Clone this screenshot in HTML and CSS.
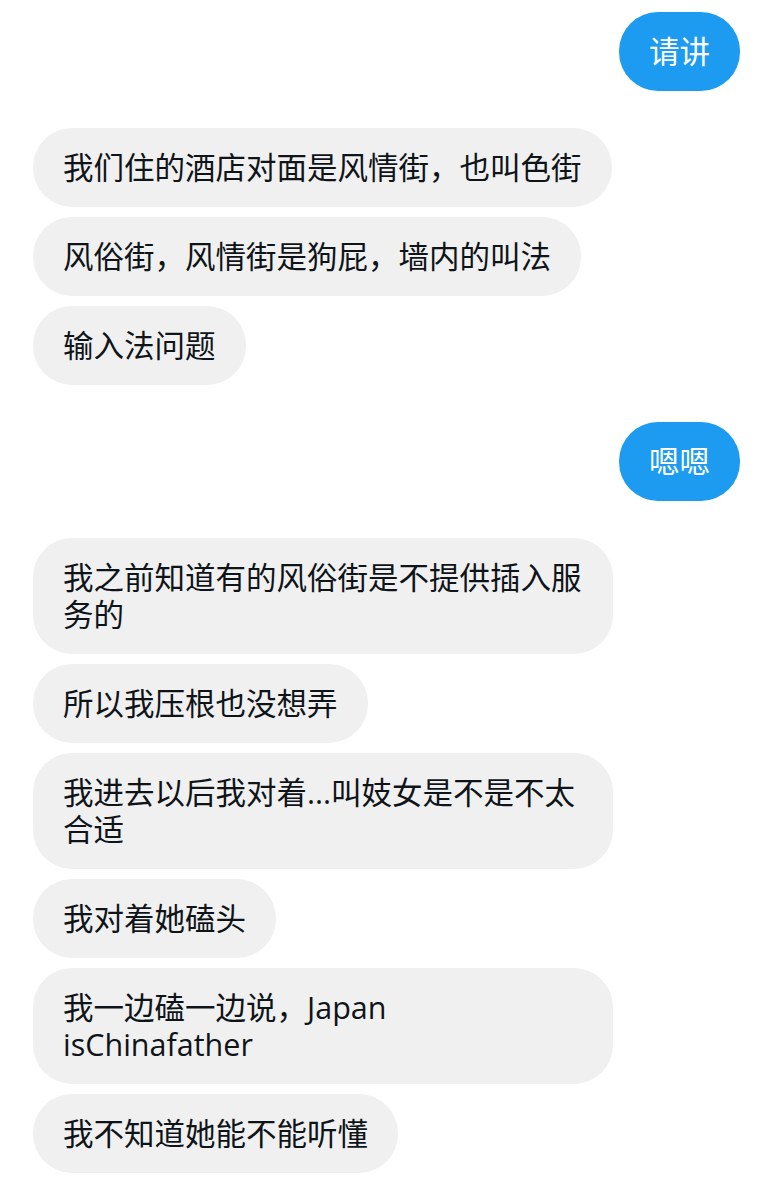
FILE: index.html
```html
<!DOCTYPE html>
<html lang="zh-CN">
<head>
<meta charset="utf-8">
<link rel="stylesheet" href="styles.css">
</head>
<body>
<div class="chat">
  <div class="group right">
    <div class="bubble sent">请讲</div>
  </div>
  <div class="group left">
    <div class="bubble recv">我们住的酒店对面是风情街，也叫色街</div>
    <div class="bubble recv">风俗街，风情街是狗屁，墙内的叫法</div>
    <div class="bubble recv">输入法问题</div>
  </div>
  <div class="group right">
    <div class="bubble sent">嗯嗯</div>
  </div>
  <div class="group left">
    <div class="bubble recv">我之前知道有的风俗街是不提供插入服务的</div>
    <div class="bubble recv">所以我压根也没想弄</div>
    <div class="bubble recv">我进去以后我对着...叫妓女是不是不太合适</div>
    <div class="bubble recv">我对着她磕头</div>
    <div class="bubble recv">我一边磕一边说，Japan isChinafather</div>
    <div class="bubble recv">我不知道她能不能听懂</div>
  </div>
</div>
</body>
</html>
```
FILE: styles.css
```css
html, body {
  margin: 0;
  padding: 0;
  background: #ffffff;
}
body {
  font-family: "Open Sans", "Noto Sans CJK SC", sans-serif;
  color: #0f1419;
}
.chat {
  display: flex;
  flex-direction: column;
  gap: 37px;
  padding: 12px 33px 0 33px;
}
.group {
  display: flex;
  flex-direction: column;
  gap: 10px;
}
.group.right {
  align-items: flex-end;
}
.group.left {
  align-items: flex-start;
}
.bubble {
  box-sizing: border-box;
  max-width: 580px;
  padding: 21px 30px;
  font-size: 30.5px;
  line-height: 37px;
  border-radius: 39px;
  word-break: break-word;
}
.sent {
  background: #1d9bf0;
  color: #ffffff;
}
.recv {
  background: #f0f0f0;
  color: #0f1419;
}
```
